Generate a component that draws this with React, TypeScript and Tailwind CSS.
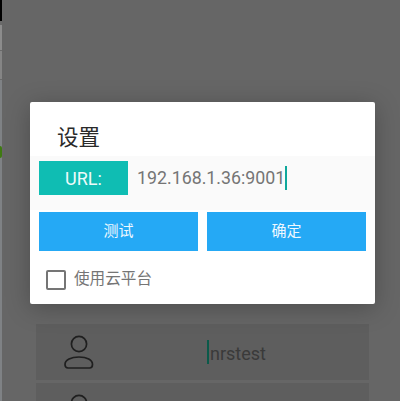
function ListRow({ name }: { name?: string }) {
  return (
    <div className="h-[56px] mb-[3px] bg-[#5e5e5e] flex items-center shrink-0">
      <div className="w-[86px] flex justify-center">
        <svg width="34" height="38" viewBox="0 0 34 38" fill="none" stroke="#1f1f1f" strokeWidth="1.7">
          <circle cx="17" cy="11" r="7.6" />
          <path d="M3 31.5c0-4.500 6-7.500 14-7.500s13.500 3 13.500 7.500c0 2-1 3.500-3 3.500H6c-2 0-3-1.500-3-3.500z" />
        </svg>
      </div>
      {name && (
        <div className="ml-[85px] flex items-center text-[18px] text-[#3a3a3a] leading-none">
          <span className="w-[2px] h-[24px] bg-[#0b5a4a] mr-[1px]" />
          <span className="pt-[3px]">{name}</span>
        </div>
      )}
    </div>
  )
}

export default function App() {
  return (
    <div className="relative w-[400px] h-[401px] overflow-hidden bg-[#666666] flex font-['Roboto','Noto_Sans_CJK_SC',sans-serif]">
      {/* edge of the window behind */}
      <div className="w-[2px] h-full flex flex-col shrink-0 bg-[#7f8285]">
        <div className="h-[21px] bg-black" />
        <div className="h-[4px] bg-[#6a6a6a]" />
        <div className="h-[26px] bg-[#8c8c8c] border-b border-[#6a6a6a]" />
        <div className="h-[29px] bg-[#858585] border-b border-[#6a6a6a]" />
        <div className="h-[66px]" />
        <div className="h-[12px] rounded-r-full bg-[#3f7a12]" />
      </div>

      {/* list behind the dialog */}
      <div className="flex-1 pt-[324px] pl-[34px] pr-[31px] flex flex-col">
        <ListRow name="nrstest" />
        <ListRow />
      </div>

      {/* dialog */}
      <div className="absolute left-[30px] top-[102px] w-[345px] h-[202px] bg-white rounded-[2px] shadow-[0_4px_24px_rgba(0,0,0,0.25)] flex flex-col">
        <div className="h-[54px] pl-[27px] pt-[21px] text-[21.5px] leading-[30px] text-[#2a2a2a]">设置</div>
        <div className="h-[54px] bg-[#fafafa] pl-[9px] flex items-start pt-[5px]">
          <div className="w-[89px] h-[34px] bg-[#0fbdb3] text-[#eefbfa] text-[18px] flex items-center justify-center">URL:</div>
          <div className="ml-[9px] h-[34px] flex items-center text-[17.8px] text-[#757575]">
            192.168.1.36:9001
            <span className="w-[2px] h-[24px] bg-[#0fa89c]" />
          </div>
        </div>
        <div className="flex gap-[9px] px-[9px] mt-[2px]">
          <button className="w-[159px] h-[39px] bg-[#25a9f5] text-[#eef8ff] text-[15px]">测试</button>
          <button className="w-[159px] h-[39px] bg-[#25a9f5] text-[#eef8ff] text-[15px]">确定</button>
        </div>
        <div className="flex items-center pl-[16px] mt-[17px]">
          <span className="w-[20px] h-[20px] border-2 border-[#757575] rounded-[2px]" />
          <span className="ml-[8px] text-[15.6px] text-[#757575]">使用云平台</span>
        </div>
      </div>
    </div>
  )
}
